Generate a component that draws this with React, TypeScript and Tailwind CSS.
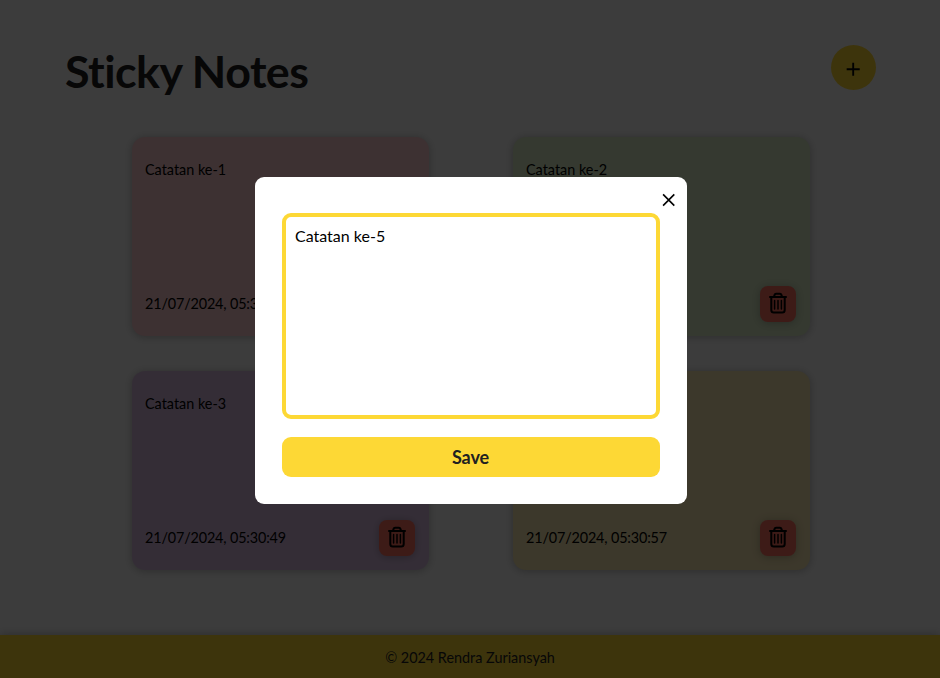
import { BiPlus } from "react-icons/bi";

type Note = { text: string; date: string; color: string };

const notes: Note[] = [
  { text: "Catatan ke-1", date: "21/07/2024, 05:30:31", color: "bg-[#fcccd0]" },
  { text: "Catatan ke-2", date: "21/07/2024, 05:30:40", color: "bg-[#dcedc8]" },
  { text: "Catatan ke-3", date: "21/07/2024, 05:30:49", color: "bg-[#dabde2]" },
  { text: "Catatan ke-4", date: "21/07/2024, 05:30:57", color: "bg-[#f9e8b3]" },
];

function TrashIcon() {
  return (
    <svg viewBox="0 0 20 22" className="h-[22px] w-5" fill="none" stroke="#000" strokeWidth="2" strokeLinecap="round" strokeLinejoin="round">
      <path d="M2 4.9H18" />
      <path d="M6.1 4.4Q6.6 1.8 8.2 1.8H11.8Q13.4 1.8 13.9 4.4" />
      <path d="M3.3 5V18Q3.3 20.6 5.8 20.6H14.2Q16.7 20.6 16.7 18V5" />
      <path d="M6.6 8.5V17M10 8.5V17M13.4 8.5V17" strokeWidth="1.5" />
    </svg>
  );
}

function NoteCard({ note }: { note: Note }) {
  return (
    <article className={`flex h-[199px] w-[297px] flex-col justify-between rounded-[13px] p-[14px] pl-[13px] shadow-[0_1px_8px_rgba(0,0,0,0.25)] ${note.color}`}>
      <p className="mt-[9px] text-[14.4px] leading-[20px]">{note.text}</p>
      <div className="flex items-center justify-between">
        <span className="text-[14.4px] leading-[20px] tracking-[-0.15px]">{note.date}</span>
        <button className="flex h-9 w-9 items-center justify-center rounded-[8px] bg-[#ff7060] pb-[2px] shadow-[0_1px_8px_rgba(0,0,0,0.25)]">
          <TrashIcon />
        </button>
      </div>
    </article>
  );
}

export default function App() {
  return (
    <div className="relative flex h-[678px] w-[940px] flex-col overflow-hidden bg-[#fafafa] font-['Lato',sans-serif] text-black [font-variant-ligatures:none]">
      <header className="flex items-start justify-between pt-[45px] pr-[64px] pl-[65px]">
        <h1 className="-mt-px text-[44.8px] leading-[54px] font-bold tracking-[-0.53px] text-[#212121]">Sticky Notes</h1>
        <button className="flex h-[45px] w-[45px] items-center justify-center rounded-full bg-[#fdd835] pt-[3px]">
          <BiPlus size={22.4} />
        </button>
      </header>
      <main className="mt-[39px] ml-[132px] grid grid-cols-[297px_297px] gap-x-[84px] gap-y-[35px]">
        {notes.map((note) => (
          <NoteCard key={note.text} note={note} />
        ))}
      </main>
      <footer className="mt-auto flex h-[43px] items-center justify-center bg-[#fdd835] pt-[3px] text-[14.4px] text-[#212121] shadow-[0_0_9px_rgba(0,0,0,0.3)]">
        © 2024 Rendra Zuriansyah
      </footer>
      <div className="absolute inset-0 flex items-start justify-center bg-black/76 pt-[177px] pl-[2px]">
        <section className="flex h-[327px] w-[432px] flex-col rounded-[9px] bg-white px-[27px] pb-[27px]">
          <button className="mt-[12px] -mr-[20px] flex h-[22px] w-[22px] items-center justify-center self-end">
            <svg viewBox="0 0 22 22" className="h-[22px] w-[22px]" fill="none" stroke="#000" strokeWidth="1.6">
              <path d="M5.1 5.4 16.3 16.6M16.3 5.4 5.1 16.6" />
            </svg>
          </button>
          <textarea
            className="mt-[2px] block h-[206px] w-full shrink-0 resize-none rounded-[9px] border-4 border-[#fdd835] px-[9px] py-[9px] text-[16px] leading-[20px] outline-none"
            defaultValue="Catatan ke-5"
          />
          <button className="mt-[18px] h-10 w-full shrink-0 rounded-[9px] bg-[#fdd835] pr-px text-[18px] font-bold tracking-[-0.1px] text-[#212121]">Save</button>
        </section>
      </div>
    </div>
  );
}
